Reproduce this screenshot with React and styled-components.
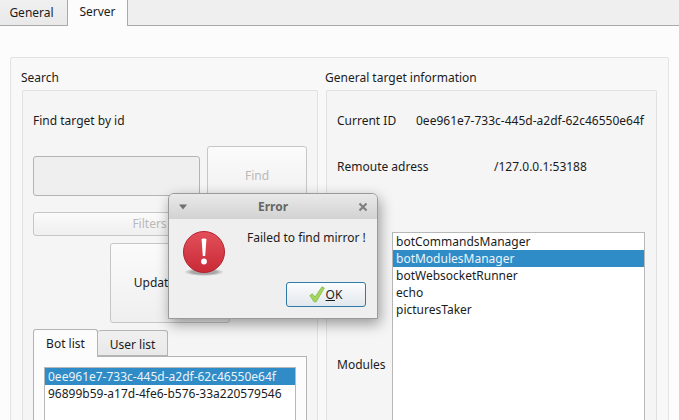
import React from 'react';
import styled, { createGlobalStyle } from 'styled-components';

const GlobalStyle = createGlobalStyle`
  html, body {
    margin: 0;
    padding: 0;
    width: 679px;
    height: 420px;
    overflow: hidden;
    background: #fcfcfc;
  }
  * {
    box-sizing: border-box;
  }
`;

const Window = styled.div`
  position: relative;
  width: 679px;
  height: 420px;
  overflow: hidden;
  background: #fcfcfc;
  color: #1b1b1b;
  font: 12px/16px 'Noto Sans', sans-serif;
`;

const TopTabs = styled.div`
  display: flex;
  height: 26px;
  background: #efefef;
  border-bottom: 1px solid #a9a9a9;
`;

const TopTab = styled.div`
  display: flex;
  justify-content: center;
  width: ${(p) => p.$width}px;
  height: ${(p) => (p.$active ? 26 : 25)}px;
  padding-top: ${(p) => (p.$active ? 4 : 5)}px;
  padding-right: ${(p) => p.$insetRight || 0}px;
  background: ${(p) => (p.$active ? '#fcfcfc' : 'linear-gradient(#f0f0f0, #e9e9e9)')};
  border-right: 1px solid #a9a9a9;
`;

const Page = styled.div`
  padding: 31px 10px 0;
`;

const OuterGroup = styled.div`
  display: grid;
  grid-template-columns: 296px 331px;
  column-gap: 8px;
  height: 400px;
  padding: 12px 11px 0 11px;
  background: #f8f8f8;
  border: 1px solid #e3e3e3;
  border-radius: 2px;
`;

const Section = styled.div`
  display: flex;
  flex-direction: column;
`;

const SectionTitle = styled.div`
  height: 20px;
  margin-left: -1px;
`;

const InnerGroup = styled.div`
  height: 380px;
  padding: 22px 10px 0;
  background: #f5f5f5;
  border: 1px solid #e1e1e1;
  border-radius: 2px;
`;

const Label = styled.div`
  height: 23px;
`;

const FindRow = styled.div`
  display: flex;
  align-items: center;
  gap: 7px;
  margin-top: 10px;
`;

const Input = styled.div`
  width: 167px;
  height: 40px;
  background: #efefef;
  border: 1px solid #b4b4b4;
  border-radius: 3px;
`;

const Button = styled.div`
  display: flex;
  align-items: center;
  justify-content: center;
  width: ${(p) => p.$width}px;
  height: ${(p) => p.$height}px;
  padding-right: ${(p) => p.$insetRight || 0}px;
  color: ${(p) => (p.$disabled ? '#b9b9b9' : '#1b1b1b')};
  background: linear-gradient(#fbfbfb, #efefef);
  border: 1px solid #c6c6c6;
  border-radius: 3px;
`;

const FiltersButton = styled(Button)`
  margin-top: 6px;
`;

const UpdateButton = styled(Button)`
  margin: 7px 0 0 77px;
`;

const ListTabs = styled.div`
  display: flex;
  align-items: flex-end;
  height: 27px;
  margin-top: 6px;
`;

const ListTab = styled.div`
  position: relative;
  display: flex;
  justify-content: center;
  width: ${(p) => p.$width}px;
  height: ${(p) => (p.$active ? 28 : 26)}px;
  margin-bottom: ${(p) => (p.$active ? -1 : 0)}px;
  padding-top: 6px;
  background: ${(p) => (p.$active ? '#fcfcfc' : 'linear-gradient(#f0f0f0, #e9e9e9)')};
  border: 1px solid #b4b4b4;
  border-left: ${(p) => (p.$active ? '1px solid #b4b4b4' : '0')};
  border-bottom: ${(p) => (p.$active ? '0' : '1px solid #b4b4b4')};
  border-radius: 3px 3px 0 0;
`;

const ListPane = styled.div`
  width: 274px;
  height: 100px;
  padding: 10px;
  background: #fcfcfc;
  border: 1px solid #b4b4b4;
`;

const List = styled.div`
  flex: none;
  width: ${(p) => p.$width}px;
  height: ${(p) => p.$height}px;
  background: #ffffff;
  border: 1px solid #b8b8b8;
`;

const ListRow = styled.div`
  height: 17px;
  padding-left: 3px;
  line-height: 17px;
  white-space: nowrap;
  color: ${(p) => (p.$selected ? '#eaf3fa' : '#1b1b1b')};
  background: ${(p) => (p.$selected ? '#308cc6' : 'transparent')};
`;

const InfoRow = styled.div`
  display: flex;
  margin-top: ${(p) => p.$top}px;
`;

const InfoLabel = styled.div`
  width: ${(p) => p.$width}px;
  white-space: nowrap;
`;

const ModulesRow = styled.div`
  display: flex;
  align-items: flex-start;
  margin-top: 57px;
`;

const ModulesLabel = styled.div`
  width: 55px;
  margin-top: 125px;
`;

const Dialog = styled.div`
  position: absolute;
  left: 168px;
  top: 193px;
  width: 210px;
  height: 126px;
  background: #efefef;
  border: 1px solid #9a9a9a;
  border-radius: 6px 6px 0 0;
  box-shadow: 2px 5px 14px rgba(0, 0, 0, 0.38);
`;

const TitleBar = styled.div`
  display: flex;
  align-items: center;
  justify-content: space-between;
  height: 25px;
  padding: 0 9px;
  color: #666666;
  font-weight: 700;
  background: linear-gradient(#e9e9e9, #d2d2d2);
  border-radius: 5px 5px 0 0;
`;

const TitleText = styled.span`
  flex: 1;
  text-align: center;
`;

const DialogBody = styled.div`
  display: flex;
  height: 63px;
  padding: 12px 12px 0 14px;
`;

const Message = styled.div`
  margin: -1px 0 0 20px;
  white-space: nowrap;
`;

const DialogFooter = styled.div`
  display: flex;
  justify-content: flex-end;
  padding-right: 11px;
`;

const OkButton = styled.div`
  display: flex;
  align-items: center;
  justify-content: center;
  gap: 1px;
  width: 80px;
  height: 25px;
  padding-right: 1px;
  background: linear-gradient(#fbfcfd, #e2e8ed);
  border: 1px solid #2f7aa8;
  border-radius: 3px;
`;

const Mnemonic = styled.span`
  text-decoration: underline;
`;

const ErrorIcon = () => (
  <svg width="44" height="46" viewBox="0 0 44 46" style={{ flex: 'none' }}>
    <defs>
      <linearGradient id="errorFill" x1="0" y1="0" x2="0" y2="1">
        <stop offset="0" stopColor="#e2505a" />
        <stop offset="1" stopColor="#c92a36" />
      </linearGradient>
      <radialGradient id="errorShadow">
        <stop offset="0.6" stopColor="#000" stopOpacity="0.3" />
        <stop offset="1" stopColor="#000" stopOpacity="0" />
      </radialGradient>
    </defs>
    <ellipse cx="21" cy="41" rx="20" ry="4" fill="url(#errorShadow)" />
    <circle cx="21" cy="21" r="20.5" fill="url(#errorFill)" stroke="#b3232e" />
    <path d="M18.6 8.5 C18.6 7 23.4 7 23.4 8.5 L22.2 25 H19.8 Z" fill="#fff" />
    <circle cx="21" cy="30.5" r="2.9" fill="#fff" />
  </svg>
);

const WindowMenuIcon = () => (
  <svg width="10" height="6" viewBox="0 0 10 6">
    <path d="M1 0.5 H9 L5 5.5 Z" fill="#6f6f6f" />
  </svg>
);

const CloseIcon = () => (
  <svg width="10" height="10" viewBox="0 0 10 10">
    <path d="M1.5 1.5 L8.5 8.5 M8.5 1.5 L1.5 8.5" stroke="#808080" strokeWidth="2.2" />
  </svg>
);

const CheckIcon = () => (
  <svg width="16" height="17" viewBox="0 0 16 17">
    <path
      d="M0.8 9.5 L3.4 7.8 L6 11 L13 0.8 L15.4 2 L7.2 15.8 L5 15.8 Z"
      fill="#a3d65e"
      stroke="#7db63e"
      strokeWidth="0.7"
      strokeLinejoin="round"
    />
  </svg>
);

const modules = ['botCommandsManager', 'botModulesManager', 'botWebsocketRunner', 'echo', 'picturesTaker'];

export default function App() {
  return (
    <Window>
      <GlobalStyle />
      <TopTabs>
        <TopTab $width={68} $insetRight={4}>General</TopTab>
        <TopTab $width={60} $active>Server</TopTab>
      </TopTabs>
      <Page>
        <OuterGroup>
          <Section>
            <SectionTitle>Search</SectionTitle>
            <InnerGroup>
              <Label>Find target by id</Label>
              <FindRow>
                <Input />
                <Button $width={100} $height={60} $disabled>Find</Button>
              </FindRow>
              <FiltersButton $width={273} $height={24} $insetRight={40} $disabled>Filters</FiltersButton>
              <UpdateButton $width={120} $height={80} $insetRight={31}>Update</UpdateButton>
              <ListTabs>
                <ListTab $width={65} $active>Bot list</ListTab>
                <ListTab $width={70}>User list</ListTab>
              </ListTabs>
              <ListPane>
                <List $width={252} $height={90}>
                  <ListRow $selected>0ee961e7-733c-445d-a2df-62c46550e64f</ListRow>
                  <ListRow>96899b59-a17d-4fe6-b576-33a220579546</ListRow>
                </List>
              </ListPane>
            </InnerGroup>
          </Section>
          <Section>
            <SectionTitle>General target information</SectionTitle>
            <InnerGroup>
              <InfoRow $top={0}>
                <InfoLabel $width={79}>Current ID</InfoLabel>
                <span>0ee961e7-733c-445d-a2df-62c46550e64f</span>
              </InfoRow>
              <InfoRow $top={30}>
                <InfoLabel $width={157}>Remoute adress</InfoLabel>
                <span>/127.0.0.1:53188</span>
              </InfoRow>
              <ModulesRow>
                <ModulesLabel>Modules</ModulesLabel>
                <List $width={253} $height={200}>
                  {modules.map((name) => (
                    <ListRow key={name} $selected={name === 'botModulesManager'}>{name}</ListRow>
                  ))}
                </List>
              </ModulesRow>
            </InnerGroup>
          </Section>
        </OuterGroup>
      </Page>
      <Dialog>
        <TitleBar>
          <WindowMenuIcon />
          <TitleText>Error</TitleText>
          <CloseIcon />
        </TitleBar>
        <DialogBody>
          <ErrorIcon />
          <Message>Failed to find mirror !</Message>
        </DialogBody>
        <DialogFooter>
          <OkButton>
            <CheckIcon />
            <span><Mnemonic>O</Mnemonic>K</span>
          </OkButton>
        </DialogFooter>
      </Dialog>
    </Window>
  );
}
